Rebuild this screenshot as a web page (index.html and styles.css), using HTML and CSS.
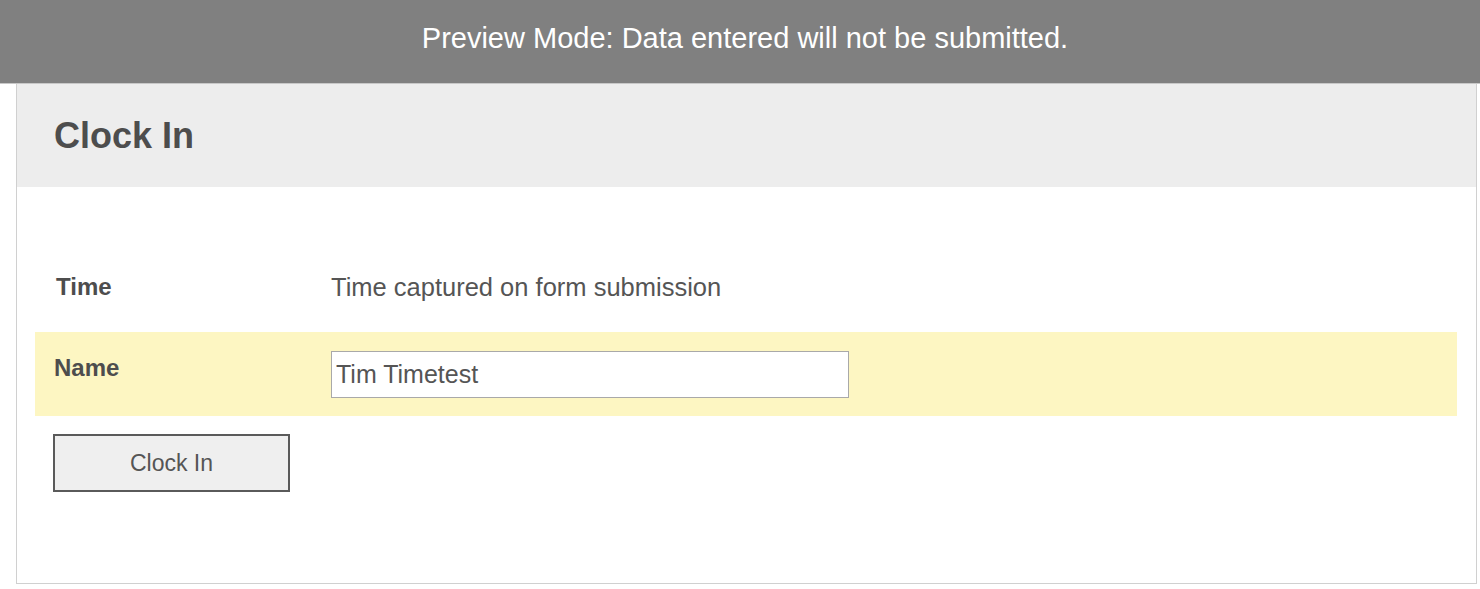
FILE: index.html
```html
<!DOCTYPE html>
<html lang="en">
<head>
  <meta charset="UTF-8">
  <meta name="viewport" content="width=device-width, initial-scale=1.0">
  <title>Clock In</title>
  <link rel="stylesheet" href="styles.css">
</head>
<body>

<div class="preview-bar">Preview Mode: Data entered will not be submitted.</div>

<div class="panel">
  <div class="panel-header">
    <h1>Clock In</h1>
  </div>
  <div class="panel-body">
    <div class="field field-static">
      <label class="field-label">Time</label>
      <div class="field-value">Time captured on form submission</div>
    </div>
    <div class="field highlight">
      <label class="field-label" for="nameInput">Name</label>
      <div class="field-value">
        <input type="text" id="nameInput" value="Tim Timetest">
      </div>
    </div>
    <div class="actions">
      <button class="submit-btn">Clock In</button>
    </div>
  </div>
</div>

</body>
</html>
```

FILE: styles.css
```css
body {
  font-family: "Liberation Sans", Arial, sans-serif;
  margin: 0;
  padding: 0;
  background-color: white;
  color: #555;
}
.preview-bar {
  background-color: #808080;
  color: white;
  font-size: 29px;
  line-height: 33px;
  height: 84px;
  box-sizing: border-box;
  padding-top: 22px;
  padding-left: 10px;
  text-align: center;
  border-bottom: 1px solid #c8c8c8;
}
.panel {
  margin-left: 16px;
  width: 1461px;
  box-sizing: border-box;
  border: 1px solid #d0d0d0;
  border-top: none;
  height: 500px;
}
.panel-header {
  background-color: #ededed;
  height: 103px;
  display: flex;
  align-items: center;
  padding-left: 37px;
}
.panel-header h1 {
  margin: 0;
  font-size: 36px;
  font-weight: bold;
  color: #4d4d4d;
}
.panel-body {
  padding: 65px 19px 0 18px;
}
.field {
  display: flex;
  align-items: flex-start;
  padding: 19px 19px 18px;
}
.field-static {
  padding-top: 20px;
  min-height: 42px;
}
.field-label {
  width: 277px;
  flex-shrink: 0;
  font-size: 24px;
  font-weight: bold;
  line-height: 30px;
  color: #4d4d4d;
}
.field-static .field-label {
  padding-left: 2px;
  width: 275px;
}
.highlight .field-label {
  padding-top: 2px;
}
.field-value {
  font-size: 25.5px;
  line-height: 30px;
}
.highlight {
  background-color: #fdf6c2;
}
.field input {
  display: block;
  width: 518px;
  height: 47px;
  box-sizing: border-box;
  border: 1px solid #a9a9a9;
  padding: 0 4px;
  font-family: "Liberation Sans", Arial, sans-serif;
  font-size: 25px;
  color: #555;
  background: white;
  margin: 0;
}
.actions {
  padding: 18px 18px;
}
.submit-btn {
  width: 237px;
  height: 58px;
  background-color: #efefef;
  border: 2px solid #5a5a5a;
  font-family: "Liberation Sans", Arial, sans-serif;
  font-size: 23px;
  color: #555;
  cursor: pointer;
}
```
